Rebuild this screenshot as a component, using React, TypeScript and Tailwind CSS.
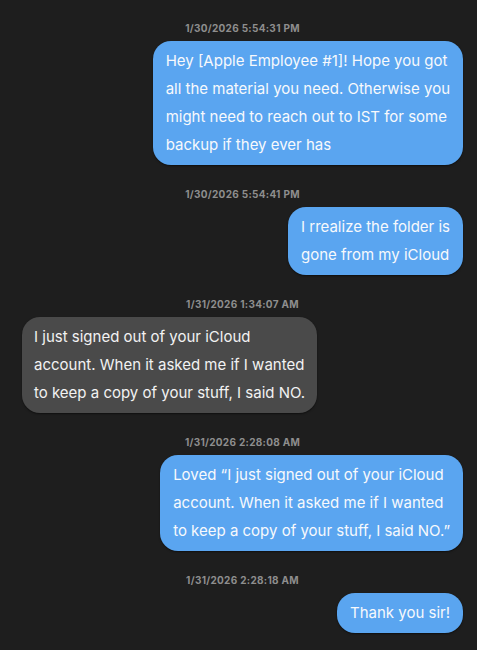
const messages = [
  {
    time: "1/30/2026 5:54:31 PM",
    mine: true,
    lines: [
      "Hey [Apple Employee #1]! Hope you got",
      "all the material you need. Otherwise you",
      "might need to reach out to IST for some",
      "backup if they ever has",
    ],
  },
  {
    time: "1/30/2026 5:54:41 PM",
    mine: true,
    lines: ["I rrealize the folder is", "gone from my iCloud"],
  },
  {
    time: "1/31/2026 1:34:07 AM",
    mine: false,
    lines: [
      "I just signed out of your iCloud",
      "account. When it asked me if I wanted",
      "to keep a copy of your stuff, I said NO.",
    ],
  },
  {
    time: "1/31/2026 2:28:08 AM",
    mine: true,
    lines: [
      "Loved \u201cI just signed out of your iCloud",
      "account. When it asked me if I wanted",
      "to keep a copy of your stuff, I said NO.\u201d",
    ],
  },
  {
    time: "1/31/2026 2:28:18 AM",
    mine: true,
    lines: ["Thank you sir!"],
  },
];

const App = () => {
  return (
    <div className="min-h-[650px] w-[477px] bg-[#1e1e1e] pt-[21px] pb-4 pl-[22px] pr-[14px] font-['Inter',sans-serif]">
      <div className="flex flex-col gap-[22px]">
        {messages.map((m) => (
          <div key={m.time} className="flex flex-col">
            {/* timestamp */}
            <div className="h-[14px] mb-[6px] text-center text-[10px] leading-[14px] font-bold text-[#8e8e8e] tracking-[0.3px]">
              {m.time}
            </div>
            <div className={m.mine ? "flex justify-end" : "flex justify-start"}>
              <div
                className={
                  m.mine
                    ? "rounded-[18px] bg-[#5aa5f0] px-[13px] py-[6px] text-[15px] leading-[28px] text-[#f7f9fc] whitespace-nowrap shadow-[0_1px_2px_rgba(0,0,0,0.5)]"
                    : "rounded-[18px] bg-[#4a4a4a] px-[12px] py-[6px] text-[15px] leading-[28px] text-[#f2f2f2] whitespace-nowrap shadow-[0_1px_2px_rgba(0,0,0,0.5)]"
                }
              >
                {m.lines.map((line, i) => (
                  <div key={i}>{line}</div>
                ))}
              </div>
            </div>
          </div>
        ))}
      </div>
    </div>
  );
};

export default App;
